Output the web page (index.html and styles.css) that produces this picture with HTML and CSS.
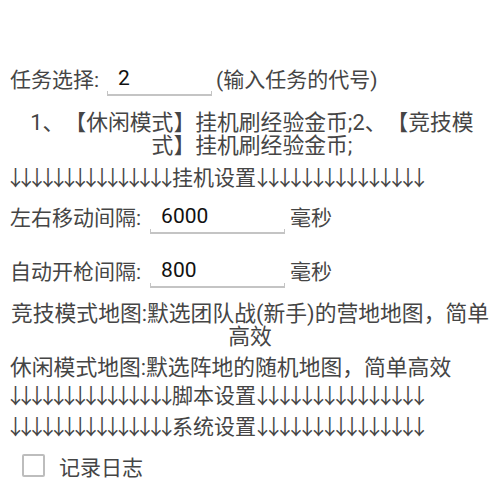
FILE: index.html
```html
<!DOCTYPE html>
<html>
<head>
<meta charset="utf-8">
<link rel="stylesheet" href="styles.css">
</head>
<body>
<div class="page">
  <div class="row row-task">
    <span class="label">任务选择:</span>
    <div class="field field-task">
      <span class="value">2</span>
      <div class="underline"></div>
    </div>
    <span class="hint">(输入任务的代号)</span>
  </div>
  <p class="text big center desc">1、【休闲模式】挂机刷经验金币;2、【竞技模式】挂机刷经验金币;</p>
  <p class="text arrows"><span class="arr arr-l">↓↓↓↓↓↓↓↓↓↓↓↓↓↓↓</span>挂机设置<span class="arr arr-r">↓↓↓↓↓↓↓↓↓↓↓↓↓↓↓</span></p>
  <div class="row row-move">
    <span class="label">左右移动间隔:</span>
    <div class="field field-ms">
      <span class="value">6000</span>
      <div class="underline"></div>
    </div>
    <span class="unit">毫秒</span>
  </div>
  <div class="row row-fire">
    <span class="label">自动开枪间隔:</span>
    <div class="field field-ms">
      <span class="value">800</span>
      <div class="underline"></div>
    </div>
    <span class="unit">毫秒</span>
  </div>
  <p class="text big center map1">竞技模式地图:默选团队战(新手)的营地地图，简单高效</p>
  <p class="text big">休闲模式地图:默选阵地的随机地图，简单高效</p>
  <p class="text arrows arrows-script"><span class="arr arr-l">↓↓↓↓↓↓↓↓↓↓↓↓↓↓↓</span>脚本设置<span class="arr arr-r">↓↓↓↓↓↓↓↓↓↓↓↓↓↓↓</span></p>
  <p class="text arrows"><span class="arr arr-l">↓↓↓↓↓↓↓↓↓↓↓↓↓↓↓</span>系统设置<span class="arr arr-r">↓↓↓↓↓↓↓↓↓↓↓↓↓↓↓</span></p>
  <div class="check-row">
    <span class="checkbox"></span>
    <span class="check-label">记录日志</span>
  </div>
</div>
</body>
</html>
```
FILE: styles.css
```css
html, body {
  margin: 0;
  padding: 0;
  background: #ffffff;
}
body {
  font-family: Roboto, "Noto Sans CJK SC", sans-serif;
  font-size: 21px;
  color: #454545;
  text-spacing-trim: space-all;
}
.page {
  width: 500px;
  padding: 54px 10px 0 10px;
  box-sizing: border-box;
}
.row {
  display: flex;
  align-items: center;
  height: 48px;
}
.row-fire {
  margin-top: 6px;
}
.label {
  white-space: nowrap;
}
.field {
  position: relative;
  display: flex;
  flex-direction: column;
  height: 48px;
  justify-content: center;
  margin-left: 4px;
}
.value {
  color: #111111;
  padding-left: 15px;
  line-height: 24px;
}
.underline {
  position: absolute;
  left: 4px;
  right: 4px;
  bottom: 6px;
  height: 3px;
  border: 1px solid #c4c4c4;
  border-top: none;
  border-bottom-width: 2px;
}
.field-task {
  width: 113px;
}
.field-ms {
  width: 143px;
  margin-left: 5px;
}
.unit {
  margin-left: 1px;
}
.text {
  margin: 0;
  padding: 4px 0;
  line-height: 23px;
}
.big {
  font-size: 21.8px;
}
.center {
  text-align: center;
}
.desc {
  margin-top: 5px;
  padding-left: 12px;
  padding-right: 8px;
}
.arrows {
  white-space: nowrap;
  font-family: "Noto Sans CJK SC", sans-serif;
}
.arrows-script {
  margin-top: -4px;
}
.arr {
  letter-spacing: -10.2px;
}
.arr-l {
  margin-left: -5px;
  margin-right: 5px;
}
.arr-r {
  margin-left: -4px;
  letter-spacing: -9.8px;
}
.map1 {
  margin-top: 4px;
}
.check-row {
  display: flex;
  align-items: center;
  height: 43px;
  margin-top: 3px;
  padding-left: 12px;
}
.checkbox {
  width: 19px;
  height: 19px;
  border: 2px solid #bdbdbd;
  border-radius: 2px;
}
.check-label {
  margin-left: 14px;
}
```
